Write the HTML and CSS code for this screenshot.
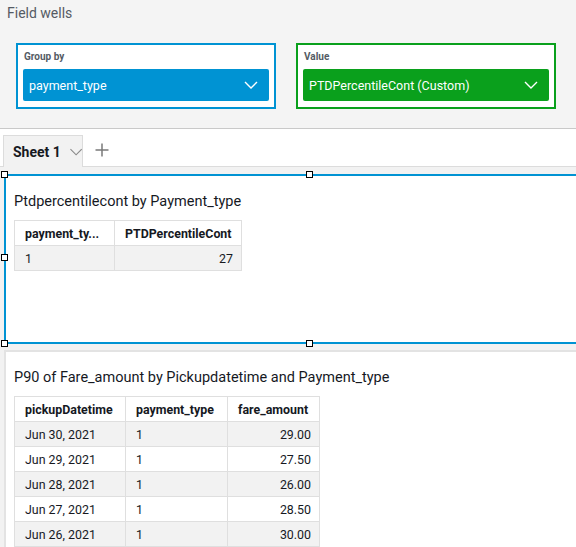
FILE: index.html
```html
<!DOCTYPE html>
<html>
<head>
<meta charset="utf-8">
<link rel="stylesheet" href="styles.css">
</head>
<body>
<div class="top">
  <div class="fw-title">Field wells</div>
  <div class="wells">
    <div class="well well-blue">
      <div class="well-label">Group by</div>
      <div class="well-bar bar-blue">
        <span>payment_type</span>
        <svg class="chev" width="14" height="8" viewBox="0 0 14 8"><path d="M1 1 L7 7 L13 1" fill="none" stroke="#fff" stroke-width="1.4"/></svg>
      </div>
    </div>
    <div class="well well-green">
      <div class="well-label">Value</div>
      <div class="well-bar bar-green">
        <span>PTDPercentileCont (Custom)</span>
        <svg class="chev" width="14" height="8" viewBox="0 0 14 8"><path d="M1 1 L7 7 L13 1" fill="none" stroke="#fff" stroke-width="1.4"/></svg>
      </div>
    </div>
  </div>
</div>
<div class="tabbar">
  <div class="tab">
    <span class="tab-name">Sheet 1</span>
    <svg width="13" height="8" viewBox="0 0 13 8"><path d="M0.5 1 L6.5 7 L12.5 1" fill="none" stroke="#8a8a8a" stroke-width="1.2"/></svg>
  </div>
  <svg class="plus" width="14" height="14" viewBox="0 0 14 14"><path d="M7 0.5 V13.5 M0.5 7 H13.5" fill="none" stroke="#7a7a7a" stroke-width="1.5"/></svg>
</div>
<div class="canvas">
  <div class="visual visual-selected">
    <div class="v-title">Ptdpercentilecont by Payment_type</div>
    <table class="grid t1">
      <colgroup><col class="c1"><col class="c2"></colgroup>
      <tr><th>payment_ty...</th><th>PTDPercentileCont</th></tr>
      <tr class="alt"><td>1</td><td class="num">27</td></tr>
    </table>
    <span class="h h-tl"></span>
    <span class="h h-tm"></span>
    <span class="h h-ml"></span>
    <span class="h h-bl"></span>
    <span class="h h-bm"></span>
  </div>
  <div class="visual visual-plain">
    <div class="v-title">P90 of Fare_amount by Pickupdatetime and Payment_type</div>
    <table class="grid t2">
      <colgroup><col class="d1"><col class="d2"><col class="d3"></colgroup>
      <tr><th>pickupDatetime</th><th>payment_type</th><th>fare_amount</th></tr>
      <tr class="alt"><td>Jun 30, 2021</td><td>1</td><td class="num">29.00</td></tr>
      <tr><td>Jun 29, 2021</td><td>1</td><td class="num">27.50</td></tr>
      <tr class="alt"><td>Jun 28, 2021</td><td>1</td><td class="num">26.00</td></tr>
      <tr><td>Jun 27, 2021</td><td>1</td><td class="num">28.50</td></tr>
      <tr class="alt"><td>Jun 26, 2021</td><td>1</td><td class="num">30.00</td></tr>
    </table>
  </div>
</div>
</body>
</html>
```
FILE: styles.css
```css
html, body {
  margin: 0;
  padding: 0;
  width: 576px;
  height: 547px;
  overflow: hidden;
  background: #f2f2f2;
  font-family: Roboto, "Liberation Sans", Arial, sans-serif;
  color: #16191f;
}

.top {
  background: #f4f4f4;
  height: 129px;
  box-sizing: border-box;
  padding: 4px 0 0 7px;
  border-bottom: 1px solid #c9c9c9;
}

.fw-title {
  font-size: 14px;
  line-height: 18px;
  color: #545b64;
}

.wells {
  display: flex;
  gap: 20px;
  margin: 21px 0 0 9px;
}

.well {
  width: 260px;
  height: 66px;
  box-sizing: border-box;
  background: #fff;
  padding: 5px 5px 0 5px;
}

.well-blue { border: 2px solid #0093d3; }
.well-green { border: 2px solid #0aa01c; }

.well-label {
  font-size: 10px;
  font-weight: bold;
  line-height: 14px;
  color: #545b64;
  margin: 0 0 5px 1px;
}

.well-bar {
  height: 32px;
  border-radius: 2px;
  display: flex;
  align-items: center;
  justify-content: space-between;
  padding: 0 11px 0 6px;
  color: #fff;
  font-size: 12.5px;
}

.bar-blue { background: #0093d3; }
.bar-green { background: #0aa01c; }

.chev { display: block; }

.tabbar {
  height: 37px;
  background: #fff;
  border-bottom: 1px solid #dcdcdc;
  display: flex;
  align-items: flex-end;
  padding-left: 3px;
}

.tab {
  width: 80px;
  height: 32px;
  box-sizing: border-box;
  background: #f2f2f2;
  border: 1px solid #dcdcdc;
  border-bottom: none;
  display: flex;
  align-items: center;
  gap: 9px;
  padding-left: 9px;
  margin-bottom: -1px;
  white-space: nowrap;
}

.tab-name {
  font-size: 14px;
  font-weight: bold;
  color: #16191f;
}

.plus {
  align-self: center;
  margin: 4px 0 0 12px;
}

.canvas {
  padding: 7px 0 0 4px;
  overflow: hidden;
}

.visual {
  position: relative;
  width: 612px;
  box-sizing: border-box;
  background: #fff;
  padding: 16px 8px 0 8px;
}

.visual-selected {
  height: 170px;
  border: 2px solid #0093d3;
}

.visual-plain {
  margin-top: 6px;
  height: 220px;
  border: 2px solid #e3e3e3;
}

.v-title {
  font-size: 14.5px;
  line-height: 20px;
  color: #16191f;
  margin-bottom: 8px;
}

.grid {
  border-collapse: collapse;
  table-layout: fixed;
  font-size: 12.4px;
}

.grid th, .grid td {
  box-sizing: border-box;
  border: 1px solid #dfdfdf;
  height: 25px;
  padding: 0 8px 0 10px;
  text-align: left;
  white-space: nowrap;
  overflow: hidden;
  text-overflow: ellipsis;
  color: #16191f;
}

.grid th {
  font-weight: bold;
  background: #fff;
}

.grid tr.alt td { background: #f2f2f2; }

.grid td.num { text-align: right; }

.t1 { width: 227px; }
.t1 .c1 { width: 100px; }
.t1 .c2 { width: 127px; }

.t2 { width: 305px; }
.t2 .d1 { width: 111px; }
.t2 .d2 { width: 102px; }
.t2 .d3 { width: 92px; }

.h {
  position: absolute;
  width: 5px;
  height: 5px;
  background: #fff;
  border: 1.5px solid #000;
}

.h-tl { left: -5px; top: -5px; }
.h-tm { left: 300px; top: -5px; }
.h-ml { left: -5px; top: 78px; }
.h-bl { left: -5px; bottom: -5px; }
.h-bm { left: 300px; bottom: -5px; }
```
